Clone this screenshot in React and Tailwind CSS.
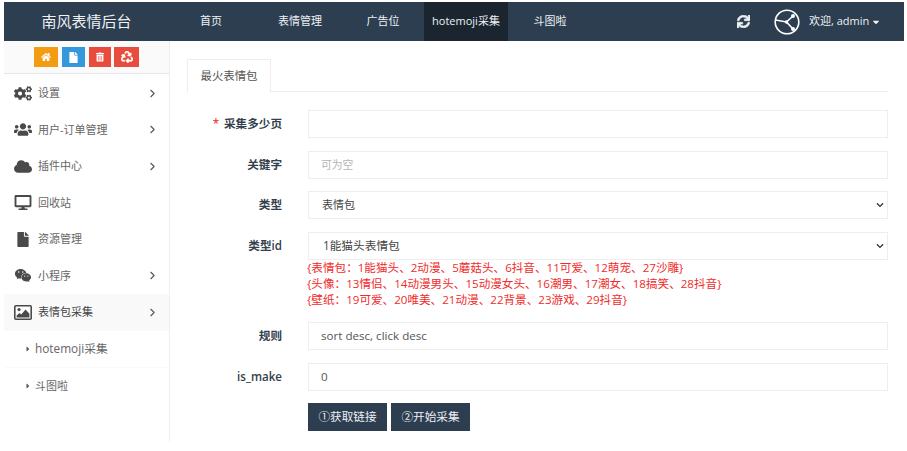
import React from "react";
import { FaHome, FaFile, FaTrashAlt, FaRecycle, FaCogs, FaUsers, FaCloud, FaDesktop, FaWeixin, FaSync, FaCaretRight, FaCaretDown, FaChevronDown } from "react-icons/fa";
import { LuChevronRight } from "react-icons/lu";

const font = { fontFamily: '"Open Sans","Noto Sans CJK SC",sans-serif' };

function PictureIcon({ className }) {
  return (
    <svg viewBox="0 0 18 15" className={className}>
      <rect x="0.8" y="0.8" width="16.4" height="13.4" rx="1" fill="#fff" stroke="currentColor" strokeWidth="1.6" />
      <circle cx="5" cy="4.6" r="1.6" fill="currentColor" />
      <path d="M2.6 12.4 L2.6 10.5 L5.5 8 L7.2 9.4 L11.5 4.6 L15.4 8.8 L15.4 12.4 Z" fill="currentColor" />
    </svg>
  );
}

const menu = [
  { icon: FaCogs, label: "设置", arrow: true },
  { icon: FaUsers, label: "用户-订单管理", arrow: true },
  { icon: FaCloud, label: "插件中心", arrow: true },
  { icon: FaDesktop, label: "回收站" },
  { icon: FaFile, label: "资源管理", small: true },
  { icon: FaWeixin, label: "小程序", arrow: true },
  { icon: PictureIcon, label: "表情包采集", arrow: true, active: true },
];

function Row({ label, req, children, className = "" }) {
  return (
    <div className={`flex items-start ${className}`}>
      <label className="w-[121px] pr-[26px] h-7 flex items-center justify-end text-[11.6px] font-semibold text-[#333f4d] shrink-0">
        {req && <span className="text-[#e74c3c] mr-[5px]">*</span>}
        {label}
      </label>
      <div className="flex-1">{children}</div>
    </div>
  );
}

function Field({ value, placeholder }) {
  return (
    <div className={`h-7 border border-[#eeeeee] bg-white flex items-center px-[12px] ${placeholder ? "text-[10.8px] text-[#b5b5b5]" : "text-[11.6px] text-[#555555]"}`}>
      {value || placeholder}
    </div>
  );
}

function SelectBox({ value, pad = "pl-[13px]", size = "text-[11px]" }) {
  return (
    <div className={`h-7 border border-[#eeeeee] bg-white flex items-center justify-between ${pad} pr-[3px] ${size} text-[#444444]`}>
      <span>{value}</span>
      <FaChevronDown className="w-[8px] h-[8px] text-[#333333]" />
    </div>
  );
}

export default function App() {
  return (
    <div className="w-[907px] h-[451px] bg-white pt-[2px] pl-[4px] pr-[3px] pb-[10px] flex flex-col overflow-hidden" style={font}>
      <header className="h-[39px] bg-[#2c3e50] flex items-center shrink-0 text-white">
        <div className="w-[165px] text-center text-[15px] text-[#eef1f4]">南风表情后台</div>
        <nav className="flex h-full text-[11px] text-[#eef1f4] ml-[13px]">
          <a className="w-[58px] mr-[18px] flex items-center justify-center">首页</a>
          <a className="w-[84px] flex items-center justify-center">表情管理</a>
          <a className="w-[82px] flex items-center justify-center">广告位</a>
          <a className="w-[84px] bg-[#1a252f] flex items-center justify-center">hotemoji采集</a>
          <a className="w-[84px] flex items-center justify-center">斗图啦</a>
        </nav>
        <div className="ml-auto flex items-center text-[11px] text-[#eef1f4]">
          <FaSync className="w-[13px] h-[13px] mr-[24px]" stroke="currentColor" strokeWidth="25" />
          <svg width="26" height="26" viewBox="0 0 26 26" fill="none" stroke="#fff" strokeWidth="1.6" className="mr-[9px]">
            <circle cx="13" cy="13" r="11.8" />
            <path d="M1.5 11 L12.5 13 L19 7 M12.5 13 L19 20" />
            <circle cx="12.5" cy="13" r="1.8" fill="#fff" stroke="none" />
            <circle cx="19" cy="7" r="2" fill="#fff" stroke="none" />
            <circle cx="19" cy="20" r="2" fill="#fff" stroke="none" />
          </svg>
          <span className="w-[58px] whitespace-nowrap">欢迎, admin</span>
          <FaCaretDown className="w-[10px] h-[10px] ml-[4px] mr-[23px]" />
        </div>
      </header>

      <div className="flex flex-1 min-h-0">
        <aside className="w-[166px] border-r border-[#eeeeee] shrink-0 text-[11px] text-[#666666]">
          <div className="h-[33px] bg-[#fafafa] border-b border-[#e4e7ec] flex items-center gap-[3px] pl-[30px] pr-[1px] text-white">
            <span className="w-[24px] h-[20px] bg-[#f39c12] flex items-center justify-center"><FaHome className="w-[10px] h-[10px]" /></span>
            <span className="w-[23px] h-[20px] bg-[#3498db] flex items-center justify-center ml-[1px]"><FaFile className="w-[9px] h-[11px]" /></span>
            <span className="w-[22px] h-[20px] bg-[#e74c3c] flex items-center justify-center ml-[1px]"><FaTrashAlt className="w-[8px] h-[10px]" /></span>
            <span className="w-[25px] h-[20px] bg-[#e74c3c] flex items-center justify-center"><FaRecycle className="w-[12px] h-[12px]" stroke="currentColor" strokeWidth="20" /></span>
          </div>
          <ul className="pt-[1px]">
            {menu.map((m) => {
              const Icon = m.icon;
              return (
                <li key={m.label} className={`h-[36.5px] flex items-center pl-[10px] pr-[10px] ${m.active ? "bg-[#f9f9f9] text-[#444444]" : ""}`}>
                  <span className="w-[18px] flex justify-center text-[#4a4a4a]"><Icon className={m.small ? "w-[12px] h-[15px]" : "w-[18px] h-[15px]"} /></span>
                  <span className="ml-[6px] flex-1">{m.label}</span>
                  {m.arrow && <LuChevronRight className="w-[13px] h-[13px] text-[#555555]" />}
                </li>
              );
            })}
          </ul>
          <div className="h-[37px] flex items-center pl-[20px] border-b border-[#fafafa] text-[11.8px] text-[#666666]">
            <FaCaretRight className="w-[8px] h-[8px] mr-[3px] text-[#555555]" />hotemoji采集
          </div>
          <div className="h-[37px] flex items-center pl-[20px] text-[11px] text-[#666666]">
            <FaCaretRight className="w-[8px] h-[8px] mr-[3px] text-[#555555]" />斗图啦
          </div>
        </aside>

        <main className="flex-1 pl-[17px] pr-[16px] pt-[18px]">
          <div className="h-[33px] border-b border-[#eeeeee] flex">
            <div className="w-[84px] h-[34px] border border-[#eeeeee] border-b-white bg-white flex items-center justify-center text-[11.4px] text-[#555555]">最火表情包</div>
          </div>
          <form className="pt-[18px]">
            <Row label="采集多少页" req className="mb-[13px]"><Field value="" /></Row>
            <Row label="关键字" className="mb-[12px]"><Field placeholder="可为空" /></Row>
            <Row label="类型" className="mb-[13px]"><SelectBox value="表情包" /></Row>
            <Row label="类型id" className="mb-[14px]">
              <SelectBox value="1能猫头表情包" pad="pl-[14px]" size="text-[11.7px]" />
              <div className="text-[11.6px] leading-[16px] text-[#f02b2b] -ml-[1px]">
                <div>{"{表情包：1能猫头、2动漫、5蘑菇头、6抖音、11可爱、12萌宠、27沙雕}"}</div>
                <div>{"{头像：13情侣、14动漫男头、15动漫女头、16潮男、17潮女、18搞笑、28抖音}"}</div>
                <div>{"{壁纸：19可爱、20唯美、21动漫、22背景、23游戏、29抖音}"}</div>
              </div>
            </Row>
            <Row label="规则" className="mb-[13px]"><Field value="sort desc, click desc" /></Row>
            <Row label="is_make" className="mb-[12px]"><Field value="0" /></Row>
            <div className="flex gap-[4px] pl-[121px] text-[11.6px] text-[#eef1f4]">
              <button type="button" className="w-[79px] h-[28px] bg-[#2c3e50] flex items-center justify-center">①获取链接</button>
              <button type="button" className="w-[79px] h-[28px] bg-[#2c3e50] flex items-center justify-center">②开始采集</button>
            </div>
          </form>
        </main>
      </div>
    </div>
  );
}
